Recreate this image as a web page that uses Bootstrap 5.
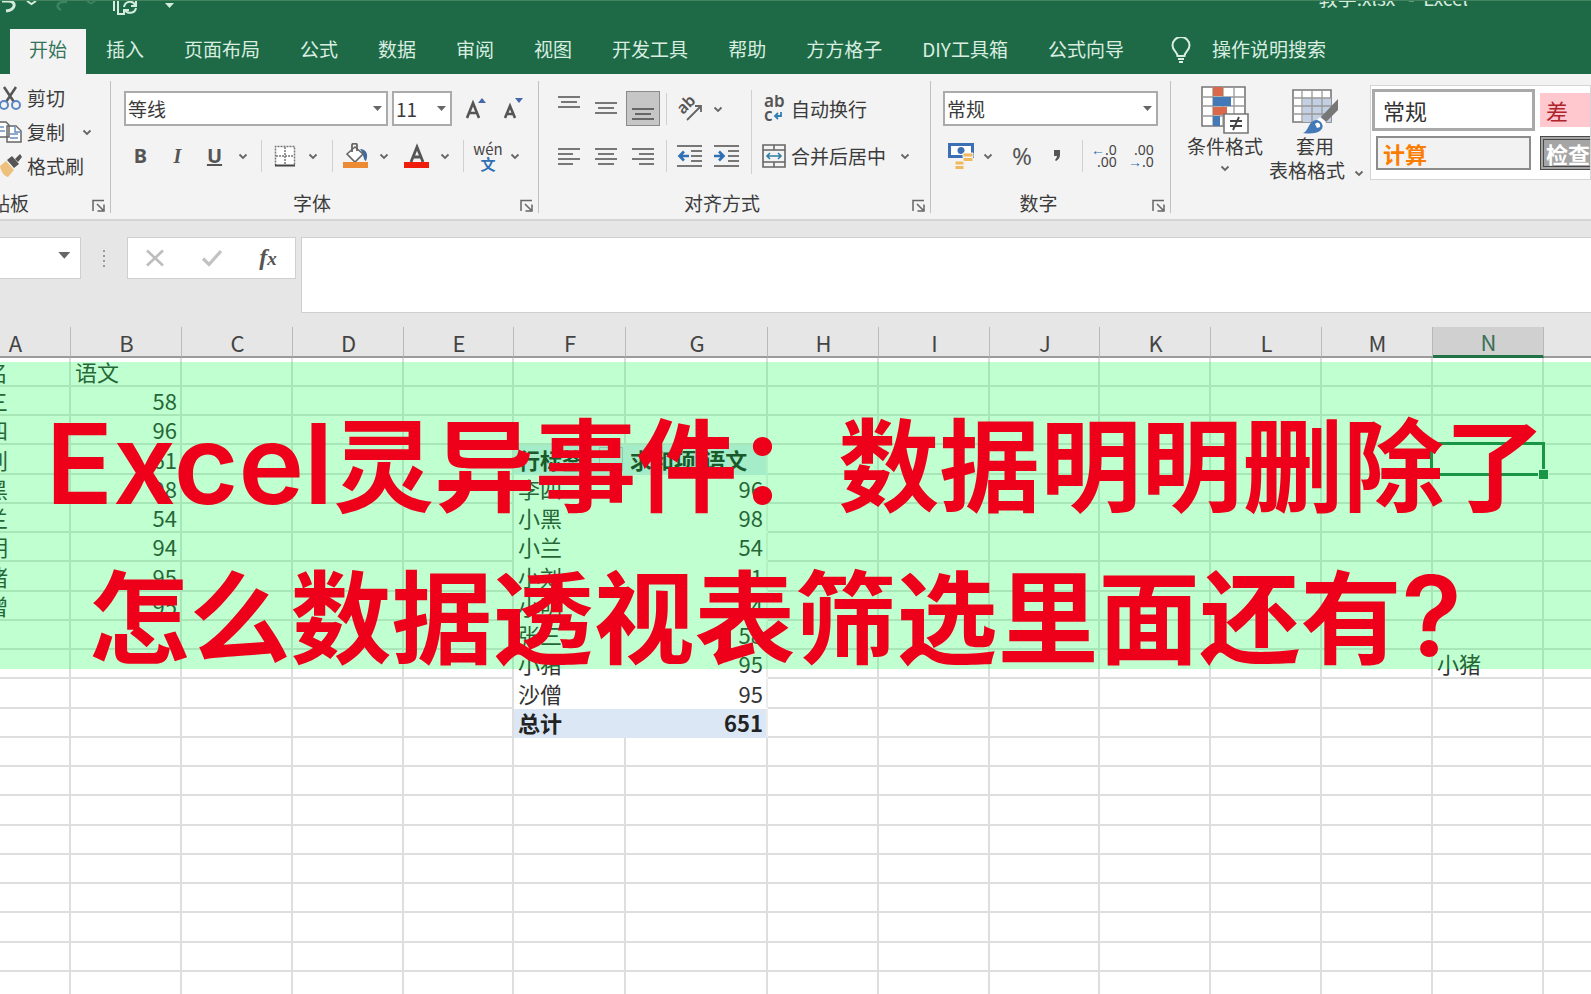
<!DOCTYPE html>
<html lang="zh-CN">
<head>
<meta charset="utf-8">
<meta name="viewport" content="width=device-width, initial-scale=1">
<title>教学.xlsx - Excel</title>
<link href="https://cdn.jsdelivr.net/npm/bootstrap@5.3.0/dist/css/bootstrap.min.css" rel="stylesheet">
<style>
  body { font-family: "Noto Sans CJK SC", sans-serif; font-size: 19px; line-height: 20px; color: #3b3b3b; background: #fff; }
  button { border: 0; background: none; padding: 0; color: inherit; line-height: 20px; white-space: nowrap; }
  svg { display: block; flex: none; }

  .title-strip { height: 29px; background: #1e6a46; border-top: 1px solid #43845f; color: #d5ebdd; }
  .doc-name { font-size: 19px; line-height: 18px; margin: -12px 123px 0 0; white-space: pre; }
  .ribbon-tabs { height: 45px; background: #1e6a46; padding-left: 10px; }
  .ribbon-tabs a { color: #d9eee1; text-decoration: none; padding: 0 20px; height: 45px; line-height: 39px; white-space: nowrap; }
  .ribbon-tabs a.active { background: #f3f3f3; color: #33745a; padding: 0 19px; }
  .ribbon-tabs .tell-me { padding-left: 22px; }

  .ribbon { height: 145px; background: #f3f3f3; padding: 7px 0 6px; }
  .tool-group { height: 132px; border-right: 1px solid #c0c0c0; flex: none; position: relative; }
  .tool-area { padding-top: 10px; display: grid; grid-auto-rows: 35px; row-gap: 12px; align-items: center; justify-items: center; }
  .group-name { margin-top: auto; line-height: 20px; padding-right: 36px; text-align: center; }
  .launcher { position: absolute; right: 4px; bottom: 0; }
  .bar { width: 1px; height: 32px; background: #d0d0d0; }
  .bar-tall { height: 84px; grid-row: 1 / 3; grid-column: 7; }

  .g-clip { width: 111px; }
  .g-clip .group-name { margin-left: -28px; text-align: left; }
  .clip-row { height: 34px; }
  .g-font { width: 428px; padding-left: 11px; }
  .g-font .tool-area { grid-template-columns: 37px 37px 37px 20px 17px 30px 26px 13px 34px 22px 43px 14px 22px 28px 26px; }
  .font-line { grid-column: 1 / -1; justify-self: start; padding-left: 2px; }
  .g-align { width: 392px; padding-left: 11px; }
  .g-align .tool-area { grid-template-columns: 37px 37px 37px 11px 36px 37px 12px 158px; }
  .g-num { width: 240px; padding-left: 12px; }
  .g-num .tool-area { grid-template-columns: 36px 18px 50px 20px 16px 42px 32px; }
  .pressed { width: 34px; height: 35px; background: #c6c6c6; border: 1px solid #8a8a8a; }
  .icon-slot { width: 34px; }

  .combo { appearance: none; height: 35px; border: 2px solid #ababab; background: #fff; color: #3b3b3b; font-size: 19px; line-height: 20px; padding: 0 2px; border-radius: 0; }
  .combo-wrap { position: relative; }
  .combo-wrap svg { position: absolute; right: 5px; top: 15px; pointer-events: none; }
  .w-face { width: 264px; }
  .w-size { width: 60px; }
  .w-format { width: 215px; }
  .glyph { font-family: "Noto Sans", sans-serif; font-size: 20px; color: #555; }
  .serif { font-family: "Liberation Serif", serif; color: #555; }
  .fx-letter { font-size: 24px; }
  .pinyin { font-size: 15px; line-height: 15px; color: #444; }
  .decimals { font-family: "Noto Sans", sans-serif; font-size: 14px; line-height: 12px; color: #444; text-align: right; white-space: nowrap; }
  .blue { color: #2f6fb3; }

  .style-area { min-width: 0; padding-left: 16px; }
  .big-tool { padding-top: 5px; line-height: 24px; }
  .as-table { margin-left: 6px; }
  .as-table .caret { position: absolute; right: -20px; bottom: 34px; }
  .gallery { height: 95px; margin: 4px 0 0 25px; background: #fff; border: 1px solid #d5d5d5; min-width: 0; overflow: hidden; display: grid; grid-template-columns: 163px 163px; grid-template-rows: 42px 34px; column-gap: 5px; row-gap: 5px; padding: 3px 0 0 1px; }
  .gallery button { font-size: 22px; text-align: left; padding-left: 6px; }
  .gallery .st-normal { border: 3px solid #a9a9a9; padding-left: 8px; color: #333; }
  .gallery .st-bad { background: #ffc7ce; color: #b0242c; margin: 4px 0; }
  .gallery .st-calc { border: 2px solid #8c8c8c; background: #f2f2f2; color: #fa7d00; font-weight: 700; margin: 0 4px; padding-left: 5px; }
  .gallery .st-check { border: 4px double #4a4a4a; background: #a5a5a5; color: #fff; font-weight: 700; padding-left: 2px; }

  .formula-zone { background: #e6e6e6; border-top: 2px solid #d4d4d4; padding: 16px 0 15px; height: 108px; }
  .formula-zone .field { border: 1px solid #cfcfcf; background: #fff; border-radius: 0; }
  .name-box { width: 81px; height: 42px; border-left: 0 !important; }
  .grip { width: 46px; }
  .fx-box { width: 169px; height: 42px; }
  .formula-input { height: 76px; margin-left: 5px; min-width: 0; border-right: 0 !important; }

  .sheet-wrap { position: relative; overflow: hidden; height: calc(100vh - 327px); min-height: 400px; background: #fff; }
  .sheet { table-layout: fixed; width: calc(100% + 104px); margin-left: -40px; border-collapse: separate; border-spacing: 0; font-size: 22px; line-height: 27px; }
  .sheet th, .sheet td { padding: 0 3px 0 4px; overflow: hidden; white-space: nowrap; }
  .sheet thead th { height: 30px; background: #e6e6e6; border-right: 1px solid #b9b9b9; border-bottom: 2px solid #9b9b9b; font-weight: 400; text-align: center; color: #444; line-height: 28px; }
  .sheet thead th.chosen { background: #d0d0d0; color: #3c7059; border-bottom: 3px solid #217346; }
  .sheet tbody tr { height: 29px; }
  .sheet tbody tr:nth-child(4n) { height: 30px; }
  .sheet td { border-right: 2px solid #dedede; border-bottom: 2px solid #dedede; color: #333; }
  .sheet td.num { text-align: right; }
  .sheet td.pv { border-color: transparent; }
  .sheet td.pv-edge { border-right-color: #ececec; }
  .sheet td.pv-head, .sheet td.pv-total { background: #dbe7f5; font-weight: 700; color: #222; }
  .sheet td.has-filter { position: relative; }
  .has-filter::after { content: ""; position: absolute; right: 1px; top: 2px; width: 24px; height: 24px; border: 1px solid #b5bcc6; background: #dfe6ef; }
  .sheet td.picked { position: relative; overflow: visible; }
  .picked::before { content: ""; position: absolute; inset: -3px; border: 3px solid #217346; }
  .picked::after { content: ""; position: absolute; right: -6px; bottom: -6px; width: 9px; height: 9px; background: #217346; outline: 1px solid #fff; }
  .c-std { width: 111px; } .c-slim { width: 110px; } .c-f { width: 112px; } .c-g { width: 142px; }

  .caption-band { position: absolute; left: 0; right: 0; top: 35px; height: 307px; padding-top: 22px; background: rgba(0,255,66,.25); }
  .caption-band p { margin: 0; text-align: center; white-space: nowrap; color: #ee001a; font-size: 101px; line-height: 152px; height: 152px; font-weight: 700; }
  .caption-band .latin { font-family: Inter, sans-serif; font-size: 111px; font-weight: 600; line-height: 100px; }
  .caption-band .asking { display: inline-block; width: 101px; text-align: left; }
</style>
</head>
<body class="overflow-hidden">

<!-- icons shared by several controls -->
<svg width="0" height="0" class="position-absolute" aria-hidden="true">
  <symbol id="chev" viewBox="0 0 12 12"><path d="M2.500 4.500 6 8l3.500-3.500" fill="none" stroke="#666" stroke-width="1.800"/></symbol>
  <symbol id="tri" viewBox="0 0 10 6"><path d="M0 0h9L4.500 5z" fill="#666"/></symbol>
  <symbol id="launch" viewBox="0 0 14 14"><path d="M1 12V1.500h11M5 5l6 6M12 5.500V12H5.500" fill="none" stroke="#666" stroke-width="1.500"/></symbol>
</svg>

<header>
  <div class="title-strip d-flex justify-content-between overflow-hidden">
    <svg width="180" height="18" viewBox="0 0 180 18" fill="none" stroke="#d5ebdd">
      <path d="M2 0h6c9 0 8 9-2 10" stroke-width="3"/><path d="M27 0l4.500 3L36 0" stroke-width="2"/>
      <path d="M61 9c-6-3-4-9 6-8" stroke="#3d8461" stroke-width="2.400"/><path d="M87 0l4 2.500L95 0" stroke="#3d8461" stroke-width="1.500"/>
      <path d="M114 0v10M118 0v13h5" stroke-width="2"/><path d="M124 6c1-6 9-7 11-2M136 0v5h-5M136 7c-1 6-9 6-11 2M124 14V9h5" stroke-width="2"/>
      <path d="M165 2h9l-4.500 5z" fill="#d5ebdd" stroke="none"/>
    </svg>
    <div class="doc-name">教学.xlsx   -  Excel</div>
  </div>
  <nav class="ribbon-tabs d-flex overflow-hidden">
    <a href="#" class="active">开始</a><a href="#">插入</a><a href="#">页面布局</a><a href="#">公式</a><a href="#">数据</a><a href="#">审阅</a><a href="#">视图</a><a href="#">开发工具</a><a href="#">帮助</a><a href="#">方方格子</a><a href="#">DIY工具箱</a><a href="#">公式向导</a>
    <a href="#" class="d-flex tell-me"><svg class="me-3 mt-2" width="30" height="28" viewBox="0 0 30 28" fill="none" stroke="#d9eee1" stroke-width="2"><path d="M11.500 19c0-4-5-5.500-5-10.500a8 8 0 0 1 17 0c0 5-5 6.500-5 10.500zM12 22h6M13 25h4"/></svg>操作说明搜索</a>
  </nav>
</header>

<section class="ribbon d-flex overflow-hidden">
  <div class="tool-group g-clip d-flex flex-column">
    <button class="clip-row d-flex align-items-center"><svg width="27" height="26" viewBox="0 0 27 26" fill="none"><path d="M4 2l10 15M16 2L6 17" stroke="#555" stroke-width="2.500"/><circle cx="4" cy="20" r="4" stroke="#5b86c4" stroke-width="2"/><circle cx="16" cy="20" r="4" stroke="#5b86c4" stroke-width="2"/></svg>剪切</button>
    <button class="clip-row d-flex align-items-center"><svg width="27" height="26" viewBox="0 0 27 26" fill="#fff" stroke="#666" stroke-width="1.500"><path d="M-4 3H6l3 3v12H-4zM7 7h9l5 5v11H7z"/><path d="M15 7v6h6M0 8h4M0 12h5M10 15h8M10 19h8" stroke="#6a8fbd"/></svg>复制<svg class="ms-3" width="12" height="12"><use href="#chev"/></svg></button>
    <button class="clip-row d-flex align-items-center"><svg width="27" height="26" viewBox="0 0 27 26"><path d="M0 13l6-5 8 9-6 7c-4-1-7-5-8-11z" fill="#edc17c"/><path d="M7 7l5-4 7 8-5 4z" fill="#555"/><path d="M15 6l5-5 2 3-4 5z" fill="#555"/></svg>格式刷</button>
    <div class="group-name">剪贴板</div>
    <button class="launcher" aria-label="剪贴板设置"><svg width="14" height="14"><use href="#launch"/></svg></button>
  </div>

  <div class="tool-group g-font d-flex flex-column">
    <div class="tool-area">
      <div class="font-line d-flex align-items-center">
        <label class="combo-wrap me-1"><select class="combo w-face" aria-label="字体"><option>等线</option></select><svg width="10" height="6"><use href="#tri"/></svg></label>
        <label class="combo-wrap"><select class="combo w-size" aria-label="字号"><option>11</option></select><svg width="10" height="6"><use href="#tri"/></svg></label>
        <button class="ms-2" aria-label="增大字号"><svg width="30" height="26" viewBox="0 0 30 26"><path d="M7 22l6-15 6 15M9 17h8" fill="none" stroke="#555" stroke-width="2.600"/><path d="M18 7l4-5 4 5z" fill="#4667ad"/></svg></button>
        <button class="ms-2" aria-label="减小字号"><svg width="30" height="26" viewBox="0 0 30 26"><path d="M7 22l5-12 5 12M9 18h6" fill="none" stroke="#555" stroke-width="2.600"/><path d="M17 2h8l-4 5z" fill="#4667ad"/></svg></button>
      </div>
      <button class="glyph fw-bold">B</button><button class="serif fs-5 fw-bold fst-italic">I</button><button class="glyph fw-bold text-decoration-underline">U</button>
      <button aria-label="下划线选项"><svg width="12" height="12"><use href="#chev"/></svg></button><span class="bar"></span>
      <button aria-label="边框"><svg width="22" height="22" viewBox="0 0 22 22" fill="#fff" stroke="#777" stroke-width="1.500"><path d="M1.500 20.500v-19h19v19M11 2v18M2 11h18" stroke-dasharray="2 1"/><path d="M1 20.500h20" stroke="#444" stroke-width="2"/></svg></button>
      <button aria-label="边框选项"><svg width="12" height="12"><use href="#chev"/></svg></button><span class="bar"></span>
      <button aria-label="填充颜色"><svg width="26" height="26" viewBox="0 0 26 26"><path d="M17 6c6 0 9 5 6 12-3-1-2-7-6-12z" fill="#41699f"/><path d="M4 11l8-7 8 7-8 8z" fill="#fff" stroke="#666" stroke-width="1.600"/><path d="M9 9V2c0-2 5-2 5 0v6" fill="none" stroke="#666" stroke-width="1.800"/><path d="M0 19h25v6H0z" fill="#ed8b35"/></svg></button>
      <button aria-label="填充颜色选项"><svg width="12" height="12"><use href="#chev"/></svg></button>
      <button aria-label="字体颜色"><svg width="26" height="26" viewBox="0 0 26 26"><path d="M7 19L13 4l6 15M9 14h8" fill="none" stroke="#555" stroke-width="2.800"/><path d="M0 19h25v6H0z" fill="#f01c0c"/></svg></button>
      <button aria-label="字体颜色选项"><svg width="12" height="12"><use href="#chev"/></svg></button><span class="bar"></span>
      <button class="pinyin" aria-label="拼音">wén<br><b class="blue">文</b></button>
      <button aria-label="拼音选项"><svg width="12" height="12"><use href="#chev"/></svg></button>
    </div>
    <div class="group-name">字体</div>
    <button class="launcher" aria-label="字体设置"><svg width="14" height="14"><use href="#launch"/></svg></button>
  </div>

  <div class="tool-group g-align d-flex flex-column">
    <div class="tool-area">
      <button aria-label="顶端对齐"><svg width="22" height="26" viewBox="0 0 22 26" stroke="#777" stroke-width="2"><path d="M0 1h22M3 6h16M0 11h22"/></svg></button>
      <button aria-label="垂直居中"><svg width="22" height="26" viewBox="0 0 22 26" stroke="#777" stroke-width="2"><path d="M0 7h22M3 12h16M0 17h22"/></svg></button>
      <button class="pressed d-flex justify-content-center align-items-end" aria-label="底端对齐"><svg width="22" height="26" viewBox="0 0 22 26" stroke="#666" stroke-width="2"><path d="M0 10h22M3 15h16M0 20h22"/></svg></button>
      <span class="bar"></span>
      <button aria-label="方向"><svg width="26" height="26" viewBox="0 0 26 26"><text transform="translate(6 19) rotate(-45)" font-family="Noto Sans" font-size="16" font-weight="600" fill="#555">ab</text><path d="M10 24L24 10M18 10h6v6" fill="none" stroke="#666" stroke-width="1.800"/></svg></button>
      <button class="me-auto ps-1" aria-label="方向选项"><svg width="12" height="12"><use href="#chev"/></svg></button>
      <span class="bar bar-tall"></span>
      <button class="d-flex align-items-center me-auto"><span class="icon-slot"><svg class="mx-auto" width="22" height="28" viewBox="0 0 22 28"><text x="1" y="12" font-family="Noto Sans" font-size="17" font-weight="600" fill="#555">ab</text><text x="1" y="26" font-family="Noto Sans" font-size="17" font-weight="600" fill="#555">c</text><path d="M18 17v4h-6M15 18l-3 3 3 3" fill="none" stroke="#2f7fb3" stroke-width="1.800"/></svg></span>自动换行</button>

      <button aria-label="左对齐"><svg width="22" height="20" viewBox="0 0 22 20" stroke="#777" stroke-width="2"><path d="M0 3h22M0 8h15M0 13h22M0 18h15"/></svg></button>
      <button aria-label="居中"><svg width="22" height="20" viewBox="0 0 22 20" stroke="#777" stroke-width="2"><path d="M0 3h22M3 8h16M0 13h22M3 18h16"/></svg></button>
      <button aria-label="右对齐"><svg width="22" height="20" viewBox="0 0 22 20" stroke="#777" stroke-width="2"><path d="M0 3h22M7 8h15M0 13h22M7 18h15"/></svg></button>
      <span class="bar"></span>
      <button aria-label="减少缩进"><svg width="26" height="24" viewBox="0 0 26 24" stroke="#777" stroke-width="2"><path d="M0 2h25M14 7h11M14 12h11M14 17h11M0 22h25"/><path d="M12 12H3M7 7.500L2.500 12 7 16.500" fill="none" stroke="#2f6fb3" stroke-width="2.600"/></svg></button>
      <button aria-label="增加缩进"><svg width="26" height="24" viewBox="0 0 26 24" stroke="#777" stroke-width="2"><path d="M0 2h25M14 7h11M14 12h11M14 17h11M0 22h25"/><path d="M0 12h9M5 7.500L9.500 12 5 16.500" fill="none" stroke="#2f6fb3" stroke-width="2.600"/></svg></button>
      <button class="d-flex align-items-center me-auto"><span class="icon-slot"><svg class="mx-auto" width="24" height="24" viewBox="0 0 24 24" fill="none" stroke="#666" stroke-width="1.600"><path d="M1 1h22v22H1zM1 6h22M1 18h22M12 1v5M12 18v5"/><path d="M5 12h14M8 9l-3 3 3 3M16 9l3 3-3 3" stroke="#2f7fa3"/></svg></span>合并后居中<svg class="ms-2" width="28" height="12" viewBox="0 0 28 12"><use href="#chev" width="12" height="12" x="5"/></svg></button>
    </div>
    <div class="group-name">对齐方式</div>
    <button class="launcher" aria-label="对齐设置"><svg width="14" height="14"><use href="#launch"/></svg></button>
  </div>

  <div class="tool-group g-num d-flex flex-column">
    <div class="tool-area">
      <div class="font-line ps-0"><label class="combo-wrap"><select class="combo w-format" aria-label="数字格式"><option>常规</option></select><svg width="10" height="6"><use href="#tri"/></svg></label></div>
      <button aria-label="会计数字格式"><svg width="26" height="28" viewBox="0 0 26 28"><path d="M1.500 2.500h23v12h-23z" fill="#fff" stroke="#3c70b5" stroke-width="3"/><circle cx="13" cy="8.500" r="3.500" fill="#3c70b5"/><path d="M15 11h10v4H15zM15 15.500h10v4H15zM7 19h9v4H7zM7 23.500h9v4H7z" fill="#eeb95f" stroke="#f3f3f3"/></svg></button>
      <button aria-label="会计格式选项"><svg width="12" height="12"><use href="#chev"/></svg></button>
      <button class="glyph fs-4">%</button><button class="glyph" aria-label="千位分隔"><svg width="10" height="16" viewBox="0 0 10 16"><path d="M2 2h6v5c0 3-2 5-4 6l-1-1c1-1 2-3 2-4H2z" fill="#555"/></svg></button><span class="bar ms-auto"></span>
      <button class="decimals"><b class="blue">←</b>.0<br>.00</button>
      <button class="decimals">.00<br><b class="blue">→</b>.0</button>
    </div>
    <div class="group-name">数字</div>
    <button class="launcher" aria-label="数字设置"><svg width="14" height="14"><use href="#launch"/></svg></button>
  </div>

  <div class="style-area d-flex flex-fill">
    <button class="big-tool d-flex flex-column align-items-center flex-shrink-0">
      <svg width="48" height="48" viewBox="0 0 48 48"><path d="M1 1h43v39H1z" fill="#fff" stroke="#777" stroke-width="1.600"/><path d="M1 11h43M1 20h43M1 30h43M12 1v39M22 1v39M33 1v39" stroke="#999" stroke-width="1.300"/><path d="M12 1h10v9H12zM12 21h14v8H12z" fill="#d9694a"/><path d="M12 11h18v9H12zM12 30h7v10h-7z" fill="#4379b7"/><path d="M23 28h24v19H23z" fill="#fff" stroke="#777" stroke-width="1.600"/><path d="M29 35h12M29 40h12M38 31l-6 13" stroke="#444" stroke-width="1.800"/></svg>
      条件格式<svg class="mt-1" width="12" height="12"><use href="#chev"/></svg></button>
    <button class="big-tool as-table d-flex flex-column align-items-center flex-shrink-0 position-relative">
      <svg class="ms-3" width="48" height="48" viewBox="0 0 48 48"><path d="M2 4h38v32H2z" fill="#fff" stroke="#777" stroke-width="1.600"/><path d="M12 12h28v24H12z" fill="#c3cfe3"/><path d="M2 12h38M2 20h38M2 28h38M11 4v32M21 4v32M31 4v32" stroke="#999" stroke-width="1.300"/><path d="M47 13v11L35 36l-5-5z" fill="#777"/><path d="M29 31l6 5-2 4-7-6z" fill="#fff"/><path d="M12 47c6-2 5-12 13-13 5 0 9 6 5 10-4 4-12 4-18 3z" fill="#4379b7"/><path d="M24 38c3-3 6 0 5 3l-3 1z" fill="#fff"/></svg>
      <span class="ms-3">套用</span><span>表格格式</span><svg class="caret" width="12" height="12"><use href="#chev"/></svg></button>
    <div class="gallery flex-fill">
      <button class="st-normal">常规</button><button class="st-bad">差</button>
      <button class="st-calc">计算</button><button class="st-check">检查单元格</button>
    </div>
  </div>
</section>

<section class="formula-zone d-flex align-items-start">
  <button class="field name-box d-flex justify-content-end align-items-center pe-2" aria-label="名称框"><svg class="mb-1" width="14" height="8" viewBox="0 0 10 6"><use href="#tri"/></svg></button>
  <svg class="grip mt-2" height="26" viewBox="0 0 46 26" fill="#999"><path d="M22 5h2v2h-2zM22 10h2v2h-2zM22 15h2v2h-2zM22 20h2v2h-2z"/></svg>
  <div class="field fx-box d-flex justify-content-around align-items-center">
    <button aria-label="取消"><svg width="18" height="18" viewBox="0 0 18 18"><path d="M1 1.500l16 15M17 1.500l-16 15" stroke="#bdbdbd" stroke-width="2.600"/></svg></button>
    <button aria-label="输入"><svg width="22" height="18" viewBox="0 0 22 18"><path d="M2 9.500l6 6L20 2" fill="none" stroke="#c2c2c2" stroke-width="3.200"/></svg></button>
    <button aria-label="插入函数" class="serif fst-italic fw-bold"><span class="fx-letter">f</span>x</button>
  </div>
  <input class="field formula-input flex-fill" aria-label="编辑栏">
</section>

<main class="sheet-wrap">
  <table class="sheet">
    <colgroup><col class="c-std"><col class="c-std"><col class="c-std"><col class="c-std"><col class="c-slim"><col class="c-f"><col class="c-g"><col class="c-std"><col class="c-std"><col class="c-slim"><col class="c-std"><col class="c-std"><col class="c-std"><col class="c-std"><col></colgroup>
    <thead><tr></tr></thead>
    <tbody></tbody>
  </table>
  <div class="caption-band">
    <p><span class="latin">Excel</span>灵异事件：数据明明删除了</p>
    <p>怎么数据透视表筛选里面还有<span class="latin asking">?</span></p>
  </div>
</main>

<script src="https://cdn.jsdelivr.net/npm/bootstrap@5.3.0/dist/js/bootstrap.bundle.min.js"></script>
<script>
  const cols = 'ABCDEFGHIJKLMNO'.split('');
  const marks = [['姓名', '语文'], ['张三', 58], ['李四', 96], ['小刘', 61], ['小黑', 98], ['小兰', 54], ['小明', 94], ['小猪', 95], ['沙僧', 95]];
  const pivot = [['行标签', '求和项:语文'], ['李四', 96], ['小黑', 98], ['小兰', 54], ['小刘', 61], ['小明', 94], ['张三', 58], ['小猪', 95], ['沙僧', 95], ['总计', 651]];
  const cells = { N11: '小猪' };
  marks.forEach((r, i) => { cells['A' + (i + 1)] = r[0]; cells['B' + (i + 1)] = r[1]; });
  pivot.forEach((r, i) => { cells['F' + (i + 4)] = r[0]; cells['G' + (i + 4)] = r[1]; });

  const head = document.querySelector('.sheet thead tr');
  cols.forEach(c => {
    const th = document.createElement('th');
    th.textContent = c;
    th.scope = 'col';
    if (c === 'N') th.className = 'chosen';
    head.append(th);
  });
  const body = document.querySelector('.sheet tbody');
  for (let r = 1; r <= 22; r++) {
    const tr = body.insertRow();
    cols.forEach(c => {
      const td = tr.insertCell(), v = cells[c + r];
      if (v !== undefined) td.textContent = v;
      if (typeof v === 'number') td.classList.add('num');
      if ((c === 'F' || c === 'G') && r >= 4 && r <= 13) {
        td.classList.add('pv');
        if (c === 'G') td.classList.add('pv-edge');
        if (r === 4) td.classList.add('pv-head');
        if (r === 13) td.classList.add('pv-total');
      }
      if (c + r === 'F4') td.classList.add('has-filter');
      if (c + r === 'N4') td.classList.add('picked');
    });
  }
</script>
</body>
</html>
